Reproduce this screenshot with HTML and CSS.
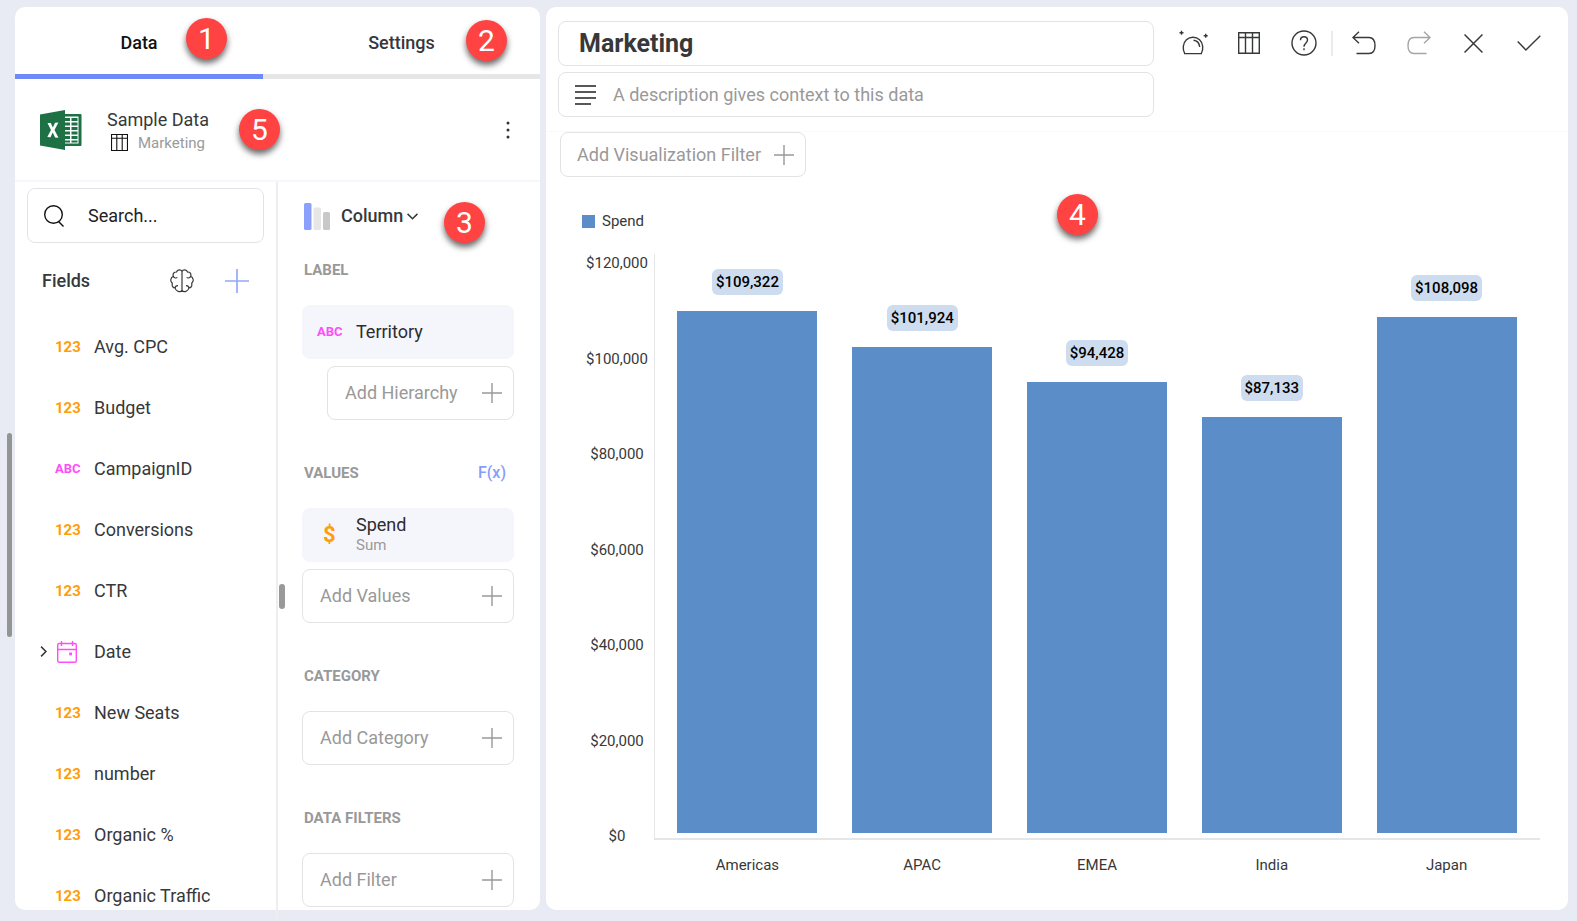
FILE: index.html
```html
<!DOCTYPE html>
<html lang="en">
<head>
<meta charset="utf-8">
<title>Marketing</title>
<link rel="stylesheet" href="styles.css">
</head>
<body>
<svg class="defs" aria-hidden="true">
  <symbol id="plus" viewBox="0 0 20 20"><path d="M10 0v20M0 10h20" fill="none" stroke="currentColor" stroke-width="1.4"/></symbol>
  <symbol id="table" viewBox="0 0 22 22"><path d="M.7.7h20.6v20.6H.7zM.7 5.5h20.6M7.5.7v20.6M14.5.7v20.6" fill="none" stroke="currentColor" stroke-width="1.4"/></symbol>
</svg>
<div class="app">
  <aside class="editor">
    <span class="page-scroll"></span>
    <div class="tabs" role="tablist">
      <button class="tab tab-active" role="tab" aria-selected="true">Data<span class="badge badge-data">1</span></button>
      <button class="tab tab-wide" role="tab" aria-selected="false">Settings<span class="badge badge-settings">2</span></button>
    </div>
    <section class="source">
      <svg class="excel" viewBox="0 0 42 40" role="img" aria-label="Excel">
        <path d="M24 4h16.500q1 0 1 1v30q0 1-1 1H24z" fill="#1e7145"/>
        <path d="M25 6.500h13.500v27H25z" fill="#fff"/>
        <path d="M25 8h5v3h-5zm6.500 0h6v3h-6zM25 12.500h5v3h-5zm6.500 0h6v3h-6zM25 17h5v3h-5zm6.500 0h6v3h-6zM25 21.500h5v3h-5zm6.500 0h6v3h-6zM25 26h5v3h-5zm6.500 0h6v3h-6zM25 30.500h5v2h-5zm6.500 0h6v2h-6z" fill="#1e7145"/>
        <path d="M0 4.500 25 0v40L0 35.500z" fill="#1e7145"/>
        <path d="M7.500 13h3.300l2 4.600 2.300-4.900 3.300-.2-3.900 7.500 4 7.700-3.400-.2-2.400-5-2.200 4.700-3.200-.2 3.700-7z" fill="#fff"/>
      </svg>
      <div class="source-names">
        <div class="source-title">Sample Data</div>
        <div class="source-sheet"><svg class="i-sheet"><use href="#table"/></svg>Marketing</div>
      </div>
      <span class="badge badge-source">5</span>
      <button class="icon-btn kebab" aria-label="More"><svg viewBox="0 0 4 18"><circle cx="2" cy="2" r="1.500"/><circle cx="2" cy="9" r="1.500"/><circle cx="2" cy="16" r="1.500"/></svg></button>
    </section>
    <div class="columns">
      <section class="fields">
        <label class="search">
          <svg viewBox="0 0 20 22"><circle cx="9.500" cy="9.500" r="8.800"/><path d="m14.500 16.500 5 5"/></svg>
          <input type="text" placeholder="Search..." aria-label="Search fields">
        </label>
        <div class="fields-head">
          <h2>Fields</h2>
          <button class="icon-btn" aria-label="Machine learning models"><svg class="i-brain" viewBox="0 0 24 24"><path d="M12 2.500v19M12 2.500C11 .4 7.400.3 6.500 3 4 2.800 2.500 4.800 3.300 7.300 1.800 8 1 9 .8 10.800c-.2 1.800.7 2.700 1.500 3.400-.6 3 .6 4.600 2.800 4.800.6 3.300 5.100 4.800 6.900 2.300M12 2.500c1-2.100 4.600-2.200 5.500.5 2.500-.2 4 1.800 3.200 4.300 1.500.7 2.300 1.700 2.500 3.500.2 1.800-.7 2.700-1.500 3.400.6 3-.6 4.600-2.800 4.800-.6 3.300-5.100 4.800-6.900 2.300M3.300 7.300c.5 1.300 1.500 1.800 2.500 1.700l1.600-.5M5.100 19c0-1.300 1.100-2.300 2.900-2.300M20.700 7.300c-.5 1.300-1.500 1.800-2.500 1.700l-1.600-.5M18.900 19c0-1.300-1.100-2.300-2.900-2.300"/></svg></button>
          <button class="icon-btn add-field" aria-label="Add field"><svg class="i-add"><use href="#plus"/></svg></button>
        </div>
        <ul class="field-list">
          <li><span class="type num">123</span>Avg. CPC</li>
          <li><span class="type num">123</span>Budget</li>
          <li><span class="type abc">ABC</span>CampaignID</li>
          <li><span class="type num">123</span>Conversions</li>
          <li><span class="type num">123</span>CTR</li>
          <li><button class="icon-btn expand" aria-label="Expand Date"><svg viewBox="0 0 6 10"><path d="m.8.600 4.400 4.400-4.400 4.400"/></svg></button><span class="type"><svg class="i-date" viewBox="0 0 20 22"><rect x=".7" y="2.500" width="18.600" height="18.800" rx="1.500"/><path d="M.7 8.500h18.600M4.500 0v5M15.500 0v5"/><path d="M12.200 11.500h2.800v2.800h-2.800z" class="dot"/></svg></span>Date</li>
          <li><span class="type num">123</span>New Seats</li>
          <li><span class="type num">123</span>number</li>
          <li><span class="type num">123</span>Organic %</li>
          <li><span class="type num">123</span>Organic Traffic</li>
        </ul>
      </section>
      <section class="config">
        <span class="splitter"></span>
        <span class="badge badge-config">3</span>
        <button class="chart-type">
          <svg class="i-columns" viewBox="0 0 26 27"><rect width="7.500" height="27" rx="1.500" fill="#8ba0fb"/><rect x="9.500" y="4.500" width="7.500" height="22.500" rx="1.500" fill="#e6e6e6"/><rect x="19" y="9" width="7" height="18" rx="1.500" fill="#c8c8c8"/></svg>
          Column
          <svg class="i-down" viewBox="0 0 10 6"><path d="m.5.600 4.500 4.400L9.500.600"/></svg>
        </button>
        <div class="group">
          <div class="group-head"><h3>LABEL</h3></div>
          <div class="chip"><span class="type abc">ABC</span>Territory</div>
          <button class="add add-nested">Add Hierarchy<svg><use href="#plus"/></svg></button>
        </div>
        <div class="group">
          <div class="group-head"><h3>VALUES</h3><button class="icon-btn fx">F(x)</button></div>
          <div class="chip"><span class="type money">$</span><span class="chip-text">Spend<small>Sum</small></span></div>
          <button class="add">Add Values<svg><use href="#plus"/></svg></button>
        </div>
        <div class="group">
          <div class="group-head"><h3>CATEGORY</h3></div>
          <button class="add">Add Category<svg><use href="#plus"/></svg></button>
        </div>
        <div class="group">
          <div class="group-head"><h3>DATA FILTERS</h3></div>
          <button class="add">Add Filter<svg><use href="#plus"/></svg></button>
        </div>
      </section>
    </div>
  </aside>
  <main class="view">
    <header class="view-head">
      <div class="inputs">
        <input class="box title" type="text" value="Marketing" aria-label="Title">
        <label class="box description">
          <svg viewBox="0 0 21 20"><path d="M0 1h21M0 7h21M0 13h21M0 19h16"/></svg>
          <input type="text" placeholder="A description gives context to this data" aria-label="Description">
        </label>
      </div>
      <div class="tools">
        <button class="icon-btn tool" aria-label="Insights"><svg class="i-bell" viewBox="0 0 30 26"><path d="M5 23.600h18M5.700 23.500C4.600 21.500 4 19 4.300 16.300c.5-5.300 4.600-9.100 9.700-9.100s9.200 3.800 9.700 9.100c.3 2.700-.3 5.200-1.400 7.200M14.500 10.200c3.500.3 5.800 2.900 6.200 6.800M2.500.7v4M.5 2.700h4M26.700 3.700v4M24.700 5.700h4"/></svg></button>
        <button class="icon-btn tool" aria-label="Show grid"><svg class="i-grid"><use href="#table"/></svg></button>
        <button class="icon-btn tool" aria-label="Help"><svg class="i-help" viewBox="0 0 26 26"><circle cx="13" cy="13" r="12"/><path d="M9.500 10.200c0-2 1.300-3.500 3.500-3.500s3.500 1.400 3.500 3.400c0 2.900-3.500 3-3.500 6.700M13 18.300v1.900"/></svg></button>
        <span class="tool-line"></span>
        <button class="icon-btn tool" aria-label="Undo"><svg class="i-turn" viewBox="0 0 24 24"><path d="M7 .7.9 6.500 7 12.300M1 6.500h16c4 0 6 2.500 6 8.300s-2 7.700-6 7.700H4.500"/></svg></button>
        <button class="icon-btn tool" aria-label="Redo" disabled><svg class="i-turn" viewBox="0 0 24 24"><path d="m17 .7 6.100 5.800-6.100 5.800M23 6.500H7c-4 0-6 2.500-6 8.300s2 7.700 6 7.700h12.500"/></svg></button>
        <button class="icon-btn tool" aria-label="Close"><svg class="i-close" viewBox="0 0 18 18"><path d="m.5.500 17 17M17.500.5l-17 17"/></svg></button>
        <button class="icon-btn tool" aria-label="Done"><svg class="i-check" viewBox="0 0 24 16"><path d="m.7 6.500 8.200 8.500L23.300.7"/></svg></button>
      </div>
    </header>
    <div class="canvas">
      <button class="box viz-filter">Add Visualization Filter<svg><use href="#plus"/></svg></button>
      <span class="badge badge-chart">4</span>
      <div class="legend"><i></i>Spend</div>
      <div class="chart">
        <div class="y-axis"><span>$120,000</span><span>$100,000</span><span>$80,000</span><span>$60,000</span><span>$40,000</span><span>$20,000</span><span>$0</span></div>
        <div class="plot">
          <div class="column"><span class="value">$109,322</span><div class="bar" style="height:91.1%"></div></div>
          <div class="column"><span class="value">$101,924</span><div class="bar" style="height:84.9%"></div></div>
          <div class="column"><span class="value">$94,428</span><div class="bar" style="height:78.7%"></div></div>
          <div class="column"><span class="value">$87,133</span><div class="bar" style="height:72.6%"></div></div>
          <div class="column"><span class="value">$108,098</span><div class="bar" style="height:90.1%"></div></div>
        </div>
        <div class="x-axis"><span>Americas</span><span>APAC</span><span>EMEA</span><span>India</span><span>Japan</span></div>
      </div>
    </div>
  </main>
</div>
</body>
</html>
```

FILE: styles.css
```css
* { box-sizing: border-box; }
body { margin: 0; background: #e8ebf4; color: #37383a; font: 18px/22px Roboto, sans-serif; }
button, input { font: inherit; color: inherit; }
button { background: none; border: 0; padding: 0; }
svg { display: block; flex: none; fill: none; stroke: currentColor; stroke-width: 1.4; }
h2, h3 { margin: 0; font-weight: 500; }
.defs { position: absolute; width: 0; height: 0; }
.icon-btn { display: flex; align-items: center; justify-content: center; }

.app { display: grid; grid-template-columns: 525px minmax(0, 1fr); gap: 6px; height: 100vh; padding: 7px 9px 11px 15px; }
.editor { position: relative; display: flex; flex-direction: column; min-height: 0; background: #fff; border-radius: 10px; }
.page-scroll { position: absolute; left: -8px; top: 426px; width: 5px; height: 204px; border-radius: 3px; background: #949494; }

.badge { position: absolute; width: 41px; height: 41px; border-radius: 50%; background: #ff4343; color: #fff; font: 400 30px/41px Roboto, sans-serif; text-align: center; box-shadow: 0 4px 6px rgba(0, 0, 0, .6); }
.badge-data { left: 171px; top: 11px; }
.badge-settings { left: 203px; top: 13px; }
.badge-source { left: 224px; top: 30px; }
.badge-config { left: 166px; top: 20px; }
.badge-chart { left: 511px; top: 62px; }

.tabs { display: flex; flex: none; }
.tab { position: relative; flex: 248; height: 72px; padding-top: 4px; border-bottom: 5px solid #e6e6e6; font-weight: 500; }
.tab-wide { flex: 277; }
.tab-active { border-color: #6f8af8; color: #111; }

.source { position: relative; display: flex; flex: none; align-items: center; height: 103px; padding: 0 26px 0 25px; border-bottom: 2px solid #f6f7fd; }
.excel { width: 42px; height: 40px; stroke: none; }
.source-names { margin-left: 25px; padding-top: 2px; }
.source-title { line-height: 24px; }
.source-sheet { display: flex; align-items: center; gap: 10px; padding-left: 4px; color: #9a9a9a; font-size: 15px; }
.i-sheet { width: 17px; height: 17px; color: #111; }
.kebab { width: 12px; height: 32px; margin-left: auto; }
.kebab svg { width: 4px; height: 18px; fill: #333; stroke: none; }

.columns { display: grid; grid-template-columns: 261px minmax(0, 1fr); flex: 1; min-height: 0; }
.fields { min-height: 0; overflow: hidden; padding: 6px 12px 0; border-bottom-left-radius: 10px; }
.search { display: flex; align-items: center; gap: 24px; height: 55px; padding: 0 16px; border: 1px solid #e3e3e3; border-radius: 8px; color: #111; }
.search svg { width: 20px; height: 22px; }
.search input, .description input { flex: 1; min-width: 0; padding: 0; border: 0; outline: 0; background: none; }
.search input::placeholder { color: #222; opacity: 1; }
.fields-head { display: flex; align-items: center; height: 73px; padding: 3px 15px 0; }
.fields-head h2 { flex: 1; font-size: 18px; }
.i-brain { width: 24px; height: 24px; stroke-width: 1.2; }
.add-field { margin-left: 31px; color: #93a8fb; }
.i-add { width: 24px; height: 24px; }
.field-list { margin: 0; padding: 0; list-style: none; }
.field-list li { position: relative; display: flex; align-items: center; height: 61px; padding-left: 28px; }
.type { flex: none; width: 39px; font-size: 15px; font-weight: 700; }
.num { color: #ff9d0a; }
.abc { color: #ff4df8; font-size: 13px; }
.money { padding-left: 6px; color: #ff9d0a; font-size: 22px; }
.expand { position: absolute; left: 13px; width: 6px; height: 22px; }
.expand svg { width: 7px; height: 11px; }
.i-date { width: 20px; height: 22px; margin-left: 2px; color: #ff4df8; }
.i-date .dot { fill: currentColor; stroke: none; }

.config { position: relative; padding: 10px 26px 0 24px; border-left: 2px solid #eee; }
.splitter { position: absolute; left: 1px; top: 402px; width: 6px; height: 25px; border-radius: 3px; background: #999; }
.chart-type { display: flex; align-items: center; height: 48px; margin: 0 0 20px 2px; font-weight: 500; }
.i-columns { width: 26px; height: 27px; margin-right: 11px; stroke: none; }
.i-down { width: 11px; height: 7px; margin-left: 4px; }
.group { display: flex; flex-direction: column; gap: 7px; margin-bottom: 43px; }
.group-head { display: flex; align-items: center; justify-content: space-between; height: 20px; margin-bottom: 18px; padding: 0 8px 0 2px; color: #999; }
.group-head h3 { font-size: 15px; line-height: 20px; font-weight: 700; }
.fx { color: #869ef9; font-size: 16px; font-weight: 500; }
.chip { display: flex; align-items: center; height: 54px; padding-left: 15px; border-radius: 8px; background: #f5f6fb; color: #2c2d2f; }
.chip-text { line-height: 20px; }
.chip small { display: block; color: #999; font-size: 15px; }
.add { display: flex; align-items: center; justify-content: space-between; height: 54px; padding: 0 11px 0 17px; border: 1px solid #e3e3e3; border-radius: 8px; color: #999; }
.add svg, .viz-filter svg { width: 20px; height: 20px; }
.add-nested { margin-left: 25px; }

.view { display: flex; flex-direction: column; min-width: 0; background: #fff; border-radius: 10px; }
.view-head { display: flex; height: 124px; padding: 14px 12px 0; }
.inputs { display: flex; flex: 1; flex-direction: column; gap: 6px; }
.box { display: flex; align-items: center; width: 100%; height: 45px; border: 1px solid #e3e3e3; border-radius: 8px; background: #fff; }
.title { padding: 0 20px; outline: 0; font-size: 25px; font-weight: 700; }
.description { gap: 17px; padding: 0 16px; }
.description svg { width: 21px; height: 20px; color: #222; }
.description input::placeholder { color: #999; opacity: 1; }
.tools { display: flex; align-items: center; height: 44px; margin-left: 12px; }
.tool { width: 55px; height: 44px; }
.tool:disabled { color: #a5a5a5; }
.tool-line { width: 2px; height: 25px; margin-right: 3px; background: #ebebeb; }
.i-bell { width: 30px; height: 26px; }
.i-grid { width: 22px; height: 22px; }
.i-help { width: 26px; height: 26px; }
.i-turn { width: 24px; height: 24px; }
.i-close { width: 19px; height: 19px; }
.i-check { width: 24px; height: 16px; }

.canvas { position: relative; display: flex; flex: 1; flex-direction: column; min-height: 0; padding: 0 28px 36px 14px; border-top: 1px solid #fafafa; }
.viz-filter { justify-content: space-between; width: 246px; padding: 0 11px 0 16px; color: #999; }
.legend { display: flex; align-items: center; gap: 7px; margin: 34px 0 23px 22px; font-size: 15px; line-height: 20px; }
.legend i { width: 13px; height: 13px; background: #5b8dc9; }
.chart { display: grid; flex: 1; grid-template-columns: 72px minmax(0, 1fr); grid-template-rows: minmax(0, 1fr) 34px; padding-left: 22px; font-size: 15px; line-height: 18px; }
.y-axis { display: flex; flex-direction: column; justify-content: space-between; align-items: center; margin-bottom: -5px; padding-right: 2px; }
.plot { display: grid; grid-template-columns: repeat(5, minmax(0, 1fr)); padding: 6px 6px 5px 5px; border: solid #e6e6e6; border-width: 0 0 2px 1px; }
.column { display: flex; flex-direction: column; align-items: center; justify-content: flex-end; }
.bar { flex: none; width: 80%; background: #5b8dc9; }
.value { margin-bottom: 16px; padding: 4px; border-radius: 6px; background: #cddcef; color: #000; font-weight: 500; }
.x-axis { display: grid; grid-column: 2; grid-template-columns: repeat(5, minmax(0, 1fr)); align-items: end; padding: 0 6px; text-align: center; }
```
